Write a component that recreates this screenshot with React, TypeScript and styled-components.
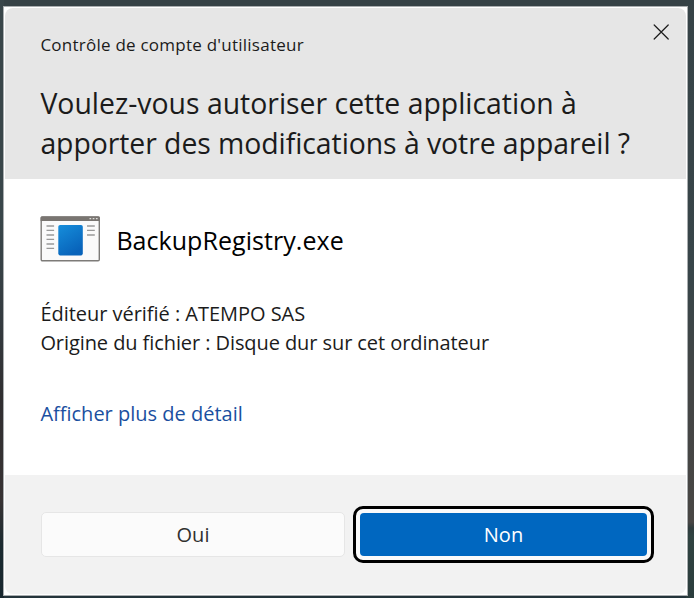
import React from 'react';
import styled, { createGlobalStyle } from 'styled-components';

const GlobalStyle = createGlobalStyle`
  *, *::before, *::after { box-sizing: border-box; }
  body { margin: 0; overflow: hidden; font-family: "Open Sans", "Noto Sans", sans-serif; color: #1b1b1b; }
`;

const Desktop = styled.main`
  width: 694px;
  height: 598px;
  padding: 6px 6px 2px 3px;
  background:
    linear-gradient(to bottom, #39464a 0, #39464a 220px, #343b40 320px, #302e30 400px, #383334 500px, #1b2a30 545px, #18272e 100%) left / 4px 100% no-repeat,
    linear-gradient(to bottom, #364347 0, #384549 280px, #434545 380px, #484644 522px, #2f3c3d 528px, #304341 536px, #2b3d3d 100%) right / 8px 100% no-repeat,
    linear-gradient(to bottom, #364246 0, #364246 50%, #24343b 50%, #24343b 100%);
`;

const Frame = styled.div`
  width: 685px;
  height: 590px;
  padding: 1px;
  border: 1px solid #a9adaf;
  background: #fff;
`;

const Dialog = styled.section`
  height: 100%;
  display: flex;
  flex-direction: column;
  border-radius: 8px;
  overflow: hidden;
  background: #fff;
`;

const Header = styled.header`
  height: 171px;
  display: flex;
  justify-content: space-between;
  padding: 0 17px 0 35.4px;
  background: #e6e6e6;
`;

const Line = styled.span<{ $size: number; $height: number; $spacing: number }>`
  display: block;
  white-space: nowrap;
  font-size: ${p => p.$size}px;
  line-height: ${p => p.$height}px;
  letter-spacing: ${p => p.$spacing}px;
`;

const Titles = styled.div`
  padding-top: 25px;
`;

const Heading = styled.h1`
  margin: 27px 0 0;
  font-weight: 400;
`;

const CloseButton = styled.button`
  width: 16px;
  height: 16px;
  margin-top: 16px;
  padding: 0;
  border: 0;
  background: none;
  color: #202020;
  svg { display: block; }
`;

const Body = styled.div`
  height: 296px;
  padding: 37px 35.4px 0;
`;

const Program = styled.div`
  height: 46px;
  display: flex;
  align-items: center;
  gap: 16px;
  color: #000;
  svg { flex: none; }
`;

const ProgramName = styled.div`
  padding-top: 2px;
`;

const Details = styled.div`
  margin-top: 38px;
`;

const DetailsLink = styled.a`
  display: block;
  margin-top: 43px;
  color: #1a4fa0;
`;

const Footer = styled.footer`
  flex: 1;
  display: flex;
  align-items: flex-start;
  padding: 31px 32px 0 36px;
  gap: 8px;
  background: #f2f2f2;
`;

const ChoiceButton = styled.button<{ $primary?: boolean }>`
  display: flex;
  align-items: center;
  justify-content: center;
  flex: none;
  padding: 0;
  font-family: inherit;
  width: ${p => (p.$primary ? 301 : 304)}px;
  height: ${p => (p.$primary ? 57 : 45)}px;
  margin: ${p => (p.$primary ? '0' : '6px 0 0')};
  color: ${p => (p.$primary ? '#fff' : '#303030')};
  border: ${p => (p.$primary ? '3px solid #000' : '1px solid #e6e6e6')};
  border-radius: ${p => (p.$primary ? 10 : 5)}px;
  background: ${p => (p.$primary ? '#fafafa' : '#fbfbfb')};
`;

const PrimaryFill = styled.span`
  display: flex;
  align-items: center;
  justify-content: center;
  width: 287px;
  height: 43px;
  border-radius: 4px;
  background: #0067c0;
`;

const CloseIcon = () => (
  <svg width="16" height="16" viewBox="0 0 16 16" fill="none" stroke="currentColor" strokeWidth="1.25" strokeLinecap="round">
    <path d="M1.2 1 15.2 15M15.2 1 1.2 15" />
  </svg>
);

const ProgramIcon = () => (
  <svg width="60" height="46" viewBox="0 0 60 46">
    <defs>
      <linearGradient id="tile" x1="0" y1="0" x2=".5" y2="1">
        <stop stopColor="#168edb" />
        <stop offset="1" stopColor="#0863ba" />
      </linearGradient>
    </defs>
    <rect x="1.2" y=".9" width="58.1" height="43.9" rx="1.2" fill="#fafafa" stroke="#7d7b78" strokeWidth="1.4" />
    <path d="M.6 1.7Q.6.4 1.9.4h56.6q1.3 0 1.3 1.3V5H.6Z" fill="#797571" />
    <path d="M49.5 2.6h1.7M52.7 2.6h1.7M55.9 2.6h1.7" stroke="#deddda" strokeWidth="1.4" />
    <path d="M6.5 10h7.6M6.5 14.4h7.6M6.5 19h7.6M6.5 23.4h7.6M6.5 28h7.6M6.5 32.4h7.6M47 10h7.8M47 14.4h7.8M47 19h7.8" stroke="#999" strokeWidth="1.3" />
    <rect x="18.3" y="9" width="24.5" height="30.4" rx="1.8" fill="url(#tile)" />
  </svg>
);

export default function App() {
  return (
    <>
      <GlobalStyle />
      <Desktop>
        <Frame>
          <Dialog>
            <Header>
              <Titles>
                <Line $size={17} $height={23} $spacing={0.24}>Contrôle de compte d'utilisateur</Line>
                <Heading>
                  <Line $size={28.4} $height={40} $spacing={0}>Voulez-vous autoriser cette application à</Line>
                  <Line $size={28.4} $height={40} $spacing={-0.06}>apporter des modifications à votre appareil ?</Line>
                </Heading>
              </Titles>
              <CloseButton aria-label="Fermer"><CloseIcon /></CloseButton>
            </Header>
            <Body>
              <Program>
                <ProgramIcon />
                <ProgramName>
                  <Line $size={25} $height={36} $spacing={0.05}>BackupRegistry.exe</Line>
                </ProgramName>
              </Program>
              <Details>
                <Line $size={20} $height={28.5} $spacing={-0.03}>Éditeur vérifié : ATEMPO SAS</Line>
                <Line $size={20} $height={28.5} $spacing={-0.08}>Origine du fichier : Disque dur sur cet ordinateur</Line>
              </Details>
              <DetailsLink>
                <Line $size={20} $height={28} $spacing={0}>Afficher plus de détail</Line>
              </DetailsLink>
            </Body>
            <Footer>
              <ChoiceButton><Line $size={20} $height={28} $spacing={0}>Oui</Line></ChoiceButton>
              <ChoiceButton $primary>
                <PrimaryFill><Line $size={20} $height={28} $spacing={0}>Non</Line></PrimaryFill>
              </ChoiceButton>
            </Footer>
          </Dialog>
        </Frame>
      </Desktop>
    </>
  );
}
